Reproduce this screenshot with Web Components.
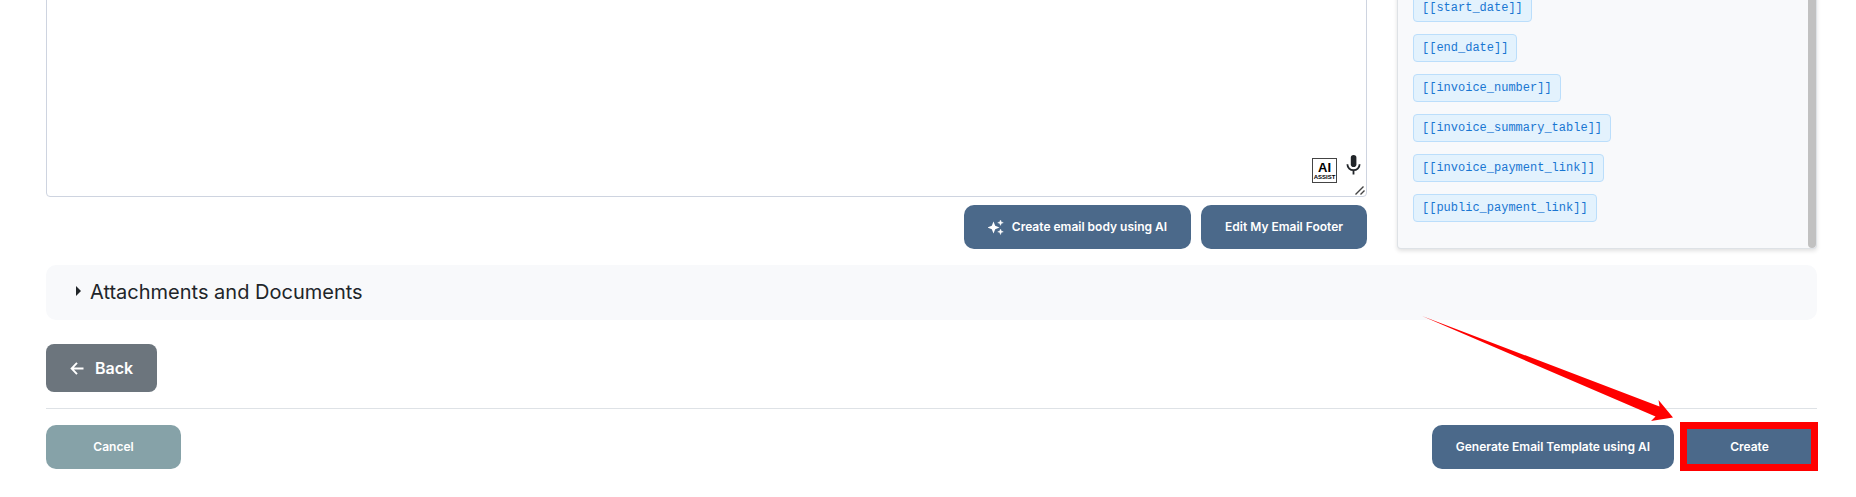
<!DOCTYPE html>
<html lang="en">
<head>
<meta charset="utf-8">
<title>Email template</title>
<style>
  body { margin: 0; background: #fff; color: #212529; font-family: Inter, "Open Sans", sans-serif; overflow-x: hidden; }
</style>
</head>
<body>
<email-template-page></email-template-page>
<script>
const define = (name, html) => {
  const template = document.createElement('template');
  template.innerHTML = html;
  customElements.define(name, class extends HTMLElement {
    constructor() {
      super();
      this.attachShadow({ mode: 'open' }).append(template.content.cloneNode(true));
    }
  });
};

define('action-button', `
  <style>
    :host { display: inline-flex; }
    button {
      display: flex; align-items: center; justify-content: center; gap: 8px;
      width: 100%; min-height: 44px; padding: 0 24px;
      border: 0; border-radius: 10px; background: #4b698a; color: #fff;
      font: 600 12px/16px Inter, "Open Sans", sans-serif; white-space: nowrap; cursor: pointer;
    }
    :host([variant="cancel"]) button { background: #86a2a8; }
    :host([variant="back"]) button {
      min-height: 48px; gap: 11px; border-radius: 8px; background: #6c757d;
      font-size: 16px; line-height: 24px;
    }
    :host([size="wide"]) button { min-width: 135px; }
  </style>
  <button type="button"><slot name="icon"></slot><slot></slot></button>
`);

define('tag-chip', `
  <style>
    :host { display: block; }
    button {
      display: block; height: 28px; padding: 0 8px; border: 1px solid #bbdefb; border-radius: 4px;
      background: #e3f2fd; color: #1976d2; cursor: pointer;
      font: 12px/18px "Liberation Mono", monospace; white-space: nowrap;
    }
  </style>
  <button type="button"><slot></slot></button>
`);

define('tag-panel', `
  <style>
    :host {
      display: flex; justify-content: space-between; box-sizing: border-box;
      background: #f8f9fb; border: 1px solid #dee2e6; border-top: 0; border-radius: 0 0 4px 4px;
      box-shadow: 0 2px 4px rgba(0, 0, 0, .12);
    }
    .tags { display: flex; flex-direction: column; align-items: flex-start; gap: 12px; padding: 0 15px 26px; }
    .bar { width: 8px; background: #c1c1c1; border-radius: 0 0 4px 4px; }
  </style>
  <div class="tags"><slot></slot></div>
  <div class="bar"></div>
`);

define('body-editor', `
  <style>
    :host { display: flex; position: relative; min-height: 0; }
    textarea {
      flex: 1; box-sizing: border-box; min-height: 160px; padding: 12px; resize: vertical;
      border: 1px solid #ced4e0; border-radius: 4px;
      background: #fff; color: inherit; font: 16px/24px Inter, sans-serif; outline: 0;
    }
    textarea::-webkit-resizer { background: transparent; }
    .grip { position: absolute; right: 2px; bottom: 2px; pointer-events: none; }
    .tools { position: absolute; right: 6px; bottom: 14px; display: flex; align-items: flex-end; gap: 9px; }
    button { display: block; padding: 0; border: 0; background: none; color: #212529; cursor: pointer; }
    .dictate { padding-bottom: 8px; }
    .assist {
      box-sizing: border-box; width: 25px; height: 25px; border: 1px solid #444; background: #fff; color: #000;
      font: 700 13px/13px "Liberation Sans", sans-serif; text-align: center;
    }
    .assist span { display: block; }
    .assist .small { font-size: 6px; line-height: 6px; }
    svg { display: block; }
  </style>
  <textarea aria-label="Email body"></textarea>
  <svg class="grip" width="10" height="9" viewBox="0 0 10 9"><path d="M.5 8.500L8.500 .5M5.500 8.500L9.500 4.500" fill="none" stroke="#444" stroke-width="1.400"/></svg>
  <div class="tools">
    <button type="button" class="assist"><span>AI</span><span class="small">ASSIST</span></button>
    <button type="button" class="dictate" aria-label="Dictate">
      <svg width="15" height="20" viewBox="0 0 15 20">
        <rect x="4.800" y="0" width="5.600" height="12" rx="2.800" fill="currentColor"/>
        <path d="M1.400 9.200c0 3.600 2.800 6 6.100 6s6.100-2.400 6.100-6M7.500 15v4.500" fill="none" stroke="currentColor" stroke-width="1.800"/>
      </svg>
    </button>
  </div>
`);

define('section-accordion', `
  <style>
    :host { display: block; background: #f8f9fb; border-radius: 10px; }
    summary {
      display: flex; align-items: center; gap: 9px; padding: 14px 30px 15px;
      font-size: 20px; line-height: 26px; list-style: none; cursor: pointer;
    }
    svg { margin-bottom: 2px; }
    details[open] svg { transform: rotate(90deg); }
  </style>
  <details>
    <summary>
      <svg width="5" height="10" viewBox="0 0 5 10"><path d="M0 0l5 5-5 5z" fill="currentColor"/></svg>
      <slot></slot>
    </summary>
  </details>
`);

define('callout-mark', `
  <style>
    :host { display: block; position: relative; }
    .frame { position: absolute; inset: -3px -1px -2px -2px; border: 7px solid #f00; pointer-events: none; }
    svg { position: absolute; right: 144px; bottom: 47px; pointer-events: none; }
  </style>
  <slot></slot>
  <div class="frame"></div>
  <svg width="251" height="106" viewBox="0 0 251 106" aria-hidden="true">
    <path d="M0 0L237.500 90.500L236.500 84L251 101.500L229 105L233.500 100.500Z" fill="#f00"/>
  </svg>
`);

define('email-template-page', `
  <style>
    :host { display: block; padding: 0 39px 28px 46px; }
    .compose { display: grid; grid-template-columns: minmax(0, 1fr) 420px; gap: 30px; margin-top: -6px; }
    .editor { display: flex; flex-direction: column; gap: 8px; }
    body-editor { flex: 1; }
    .row { display: flex; justify-content: flex-end; gap: 10px; }
    section-accordion { margin-top: 16px; }
    .back { margin-top: 24px; }
    footer {
      display: flex; justify-content: space-between;
      margin-top: 16px; padding-top: 16px; border-top: 1px solid #dee2e6;
    }
    footer .row { gap: 8px; }
    svg { display: block; }
  </style>
  <main>
    <div class="compose">
      <div class="editor">
        <body-editor></body-editor>
        <div class="row">
          <action-button>
            <svg slot="icon" width="16" height="15" viewBox="0 0 16 15" fill="currentColor">
              <path d="M5.500 1.500l1.700 4.300 4.300 1.700-4.300 1.700-1.700 4.300-1.700-4.300-4.300-1.700 4.300-1.700z"/>
              <path d="M12.500 0l.8 1.900 2 .8-2 .8-.8 1.900-.8-1.900-2-.8 2-.8zM12.500 9l.8 2 2 .8-2 .8-.8 2-.8-2-2-.8 2-.8z" stroke="currentColor" stroke-width=".4"/>
            </svg>
            Create email body using AI
          </action-button>
          <action-button>Edit My Email Footer</action-button>
        </div>
      </div>
      <tag-panel>
        <tag-chip>[[start_date]]</tag-chip>
        <tag-chip>[[end_date]]</tag-chip>
        <tag-chip>[[invoice_number]]</tag-chip>
        <tag-chip>[[invoice_summary_table]]</tag-chip>
        <tag-chip>[[invoice_payment_link]]</tag-chip>
        <tag-chip>[[public_payment_link]]</tag-chip>
      </tag-panel>
    </div>
    <section-accordion>Attachments and Documents</section-accordion>
    <div class="back">
      <action-button variant="back">
        <svg slot="icon" width="14" height="13" viewBox="0 0 14 13" fill="none" stroke="currentColor" stroke-width="1.900">
          <path d="M7 .8L1.600 6.500 7 12.200M1.600 6.500H13.500"/>
        </svg>
        Back
      </action-button>
    </div>
    <footer>
      <action-button variant="cancel" size="wide">Cancel</action-button>
      <div class="row">
        <action-button>Generate Email Template using AI</action-button>
        <callout-mark><action-button size="wide">Create</action-button></callout-mark>
      </div>
    </footer>
  </main>
`);
</script>
</body>
</html>
